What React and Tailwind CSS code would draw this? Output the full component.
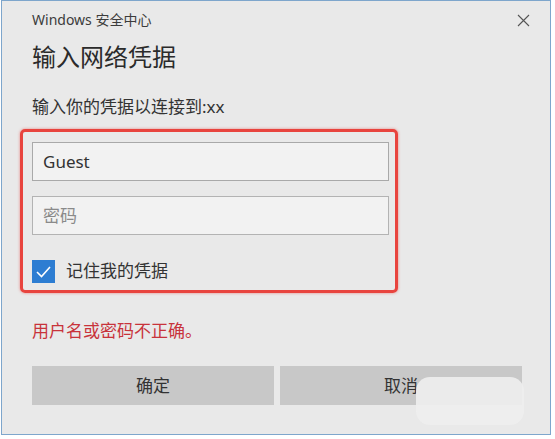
export default function App() {
  return (
    <div className="w-[555px] h-[439px] bg-white font-['Noto_Sans','Noto_Sans_CJK_SC',sans-serif]">
      <div className="relative ml-px w-[550px] h-[435px] border border-[#7ea6cc] bg-[#e9e9e9] flex flex-col pl-[30px]">
        {/* Title bar */}
        <div className="mt-[9px] h-[20px] flex items-center justify-between mr-[20px]">
          <span className="text-[14px] leading-[20px] text-[#3c3c3c]">Windows 安全中心</span>
          <svg width="13" height="13" viewBox="0 0 13 13" className="text-[#555]">
            <path d="M1 1 L12 12 M12 1 L1 12" stroke="currentColor" strokeWidth="1.1" fill="none" />
          </svg>
        </div>

        <h1 className="mt-[11px] text-[24px] leading-[32px] text-[#2b2b2b]">输入网络凭据</h1>
        <p className="mt-[22px] text-[17px] leading-[24px] text-[#333]">输入你的凭据以连接到:xx</p>

        {/* Highlighted credential box */}
        <div className="mt-[10px] -ml-3 w-[378px] h-[164px] border-[3px] border-[#e8443e] rounded-[5px] shadow-[0_0_3px_rgba(232,68,62,0.6)] pt-[10px] pl-[9px]">
          <div className="w-[357px] h-[39px] border border-[#a9a9a9] bg-[#f2f2f2] flex items-center pl-[10px] text-[17px] text-[#333]">
            Guest
          </div>
          <div className="mt-[15px] w-[357px] h-[39px] border border-[#b3b3b3] bg-[#f2f2f2] flex items-center pl-[10px] text-[17px] text-[#8a8a8a]">
            密码
          </div>
          <div className="mt-[24px] flex items-center gap-[11px]">
            <div className="w-[23px] h-[23px] bg-[#2d7dd2] flex items-center justify-center">
              <svg width="17" height="17" viewBox="0 0 17 17">
                <path d="M2 9 L6.5 13.5 L15 4" stroke="white" strokeWidth="1.6" fill="none" />
              </svg>
            </div>
            <span className="text-[17px] leading-[24px] text-[#333]">记住我的凭据</span>
          </div>
        </div>

        <p className="mt-[26px] text-[17px] leading-[24px] text-[#c8333b]">用户名或密码不正确。</p>

        {/* Buttons */}
        <div className="mt-[23px] flex gap-[6px]">
          <button className="w-[242px] h-[39px] bg-[#c8c8c8] text-[17px] text-[#333]">确定</button>
          <button className="w-[242px] h-[39px] bg-[#c8c8c8] text-[17px] text-[#333]">取消</button>
        </div>

        {/* watermark smudge */}
        <div className="absolute left-[414px] top-[376px] w-[108px] h-[48px] rounded-[14px] bg-[#eeeeee]/90" />
      </div>
    </div>
  );
}
